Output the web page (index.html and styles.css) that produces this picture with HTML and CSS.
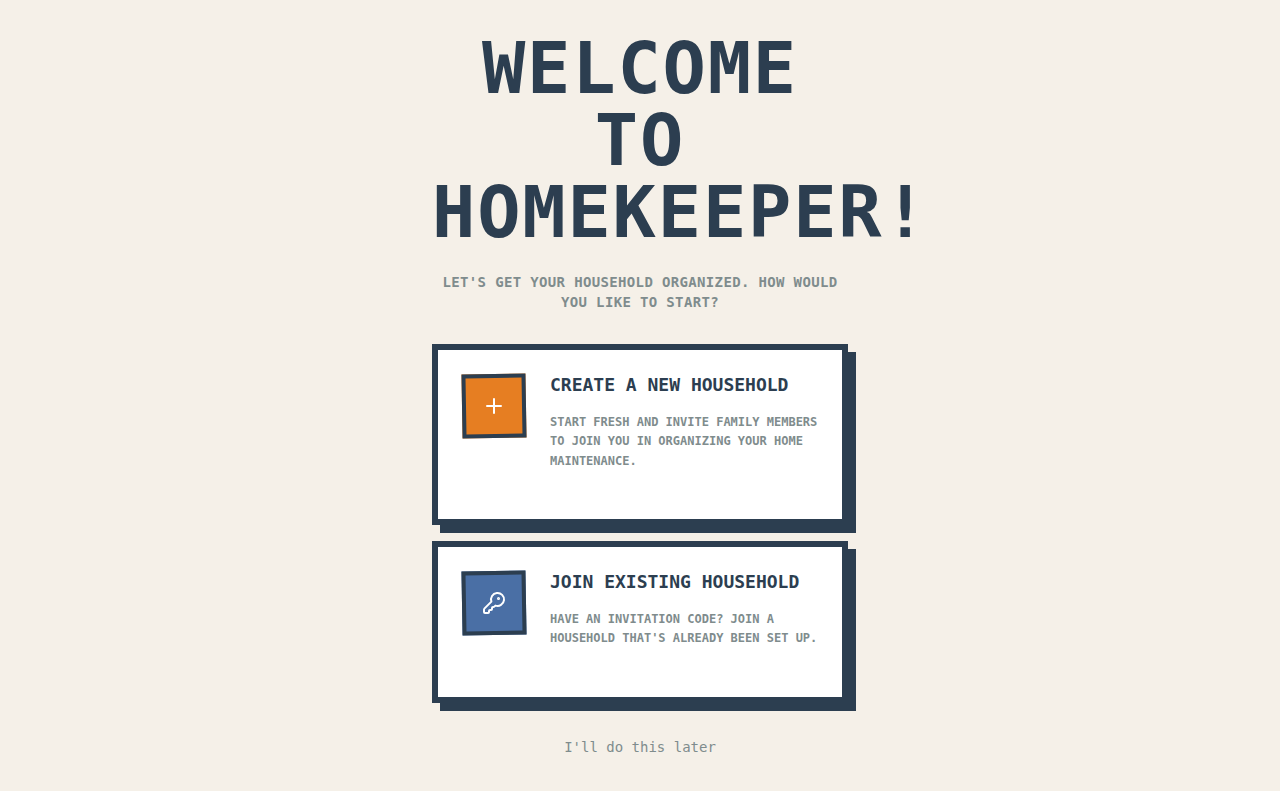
FILE: index.html
```html
<!DOCTYPE html>
<html lang="en">
<head>
<meta charset="utf-8">
<meta name="viewport" content="width=device-width, initial-scale=1">
<title>Welcome to HomeKeeper</title>
<link rel="stylesheet" href="styles.css">
</head>
<body>
<main class="welcome">
  <header class="intro">
    <h1 class="title">Welcome to HomeKeeper!</h1>
    <p class="subtitle">Let's get your household organized. How would you like to start?</p>
  </header>
  <div class="options">
    <button type="button" class="card">
      <span class="icon icon-create">
        <svg viewBox="0 0 24 24" width="24" height="24" aria-hidden="true"><path d="M5 12h14M12 5v14"/></svg>
      </span>
      <span class="card-text">
        <span class="card-title">Create a new household</span>
        <span class="card-desc">Start fresh and invite family members to join you in organizing your home maintenance.</span>
      </span>
    </button>
    <button type="button" class="card">
      <span class="icon icon-join">
        <svg viewBox="0 0 24 24" width="24" height="24" aria-hidden="true"><path d="M2.586 17.414A2 2 0 0 0 2 18.828V21a1 1 0 0 0 1 1h3a1 1 0 0 0 1-1v-1a1 1 0 0 1 1-1h1a1 1 0 0 0 1-1v-1a1 1 0 0 1 1-1h.172a2 2 0 0 0 1.414-.586l.814-.814a6.5 6.5 0 1 0-4-4z"/><circle class="dot" cx="16.5" cy="7.5" r=".5"/></svg>
      </span>
      <span class="card-text">
        <span class="card-title">Join existing household</span>
        <span class="card-desc">Have an invitation code? Join a household that's already been set up.</span>
      </span>
    </button>
  </div>
  <button type="button" class="later">I'll do this later</button>
</main>
</body>
</html>
```

FILE: styles.css
```css
* {
  box-sizing: border-box;
}

body {
  margin: 0;
  min-height: 100vh;
  background: #f5f0e8;
  color: #2c3e50;
  font-family: "DejaVu Sans Mono", monospace;
}

.welcome {
  max-width: 448px;
  margin: 0 auto;
  padding: 32px 16px;
}

.title {
  margin: 0 0 24px;
  font-size: 72px;
  line-height: 72px;
  font-weight: 700;
  letter-spacing: 0.025em;
  text-align: center;
  text-transform: uppercase;
}

.subtitle {
  margin: 0 0 32px;
  color: #7f8c8d;
  font-size: 14px;
  line-height: 20px;
  font-weight: 700;
  letter-spacing: 0.025em;
  text-align: center;
  text-transform: uppercase;
}

.options {
  display: grid;
  gap: 16px;
}

.card {
  display: flex;
  align-items: flex-start;
  gap: 24px;
  width: 100%;
  padding: 24px 24px 48px;
  border: 6px solid #2c3e50;
  background: #fff;
  box-shadow: 8px 8px 0 #2c3e50;
  color: inherit;
  font: inherit;
  text-align: left;
  text-transform: uppercase;
  cursor: pointer;
}

.icon {
  display: flex;
  flex: none;
  align-items: center;
  justify-content: center;
  width: 64px;
  height: 64px;
  border: 4px solid #2c3e50;
  transform: rotate(-1deg);
}

.icon-create {
  background: #e67e22;
}

.icon-join {
  background: #4a6fa5;
}

.icon svg {
  fill: none;
  stroke: #fff;
  stroke-width: 2;
  stroke-linecap: round;
  stroke-linejoin: round;
  transform: rotate(1deg);
}

.icon .dot {
  fill: #fff;
}

.card-text {
  flex: 1;
}

.card-title,
.card-desc {
  display: block;
  font-weight: 700;
}

.card-title {
  margin-bottom: 16px;
  font-size: 18px;
  line-height: 1.25;
}

.card-desc {
  color: #7f8c8d;
  font-size: 12px;
  line-height: 1.625;
}

.later {
  display: block;
  margin: 32px auto 0;
  padding: 0;
  border: 0;
  background: none;
  color: #7f8c8d;
  font: inherit;
  font-size: 14px;
  line-height: 24px;
  cursor: pointer;
}
```
